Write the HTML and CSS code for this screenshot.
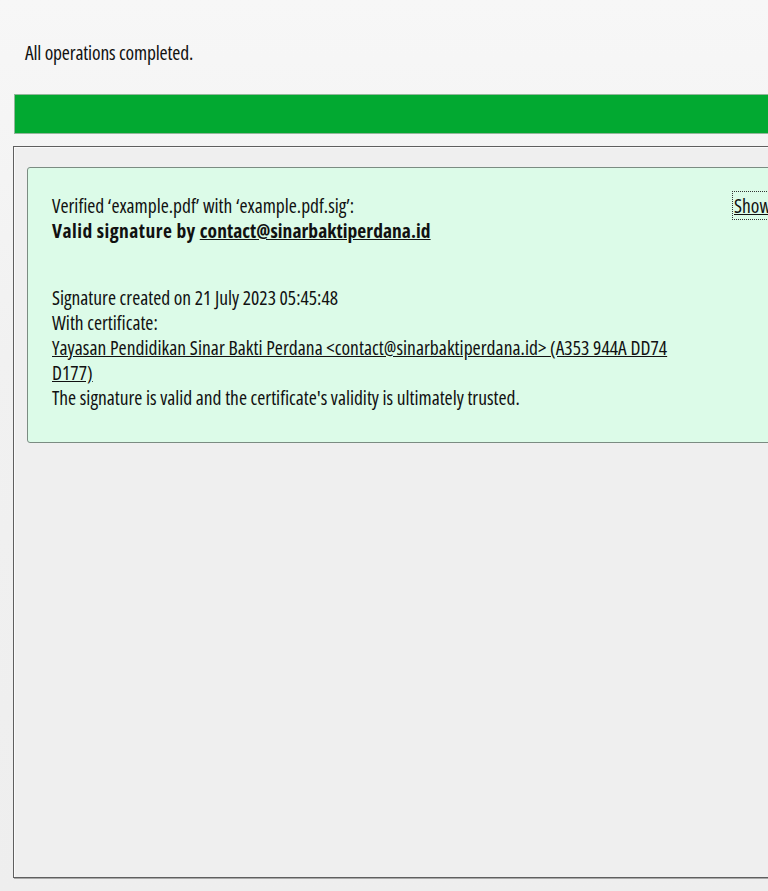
FILE: index.html
```html
<!DOCTYPE html>
<html lang="en">
<head>
    <meta charset="UTF-8">
    <meta name="viewport" content="width=device-width, initial-scale=1.0">
    <title>Verification result</title>
    <link rel="stylesheet" href="styles.css">
</head>
<body>
    <div class="window">
        <p class="status">All operations completed.</p>

        <!-- progress -->
        <div class="progress"></div>

        <div class="results">
            <div class="result ok">
                <div class="result-text">
                    <p>Verified ‘example.pdf’ with ‘example.pdf.sig’:<br>
                    <b>Valid signature by <a href="#">contact@sinarbaktiperdana.id</a></b></p>

                    <p class="details">Signature created on 21 July 2023 05:45:48<br>
                    With certificate:<br>
                    <a href="#">Yayasan Pendidikan Sinar Bakti Perdana &lt;contact@sinarbaktiperdana.id&gt; (A353 944A DD74 D177)</a><br>
                    The signature is valid and the certificate's validity is ultimately trusted.</p>
                </div>
                <a class="show" href="#">Show</a>
            </div>
        </div>
    </div>
</body>
</html>
```

FILE: styles.css
```css
/* base */
html, body {
    margin: 0;
    padding: 0;
    overflow: hidden;
}
body {
    font-family: "Open Sans", "DejaVu Sans", sans-serif;
    font-stretch: condensed;
    font-size: 19.5px;
    font-weight: 430;
    line-height: 25px;
    color: #111;
    background: linear-gradient(180deg, #f7f7f7 0%, #f1f1f1 40%, #eeeeee 100%);
    height: 891px;
}
a {
    color: #111;
    text-decoration: underline;
}
p {
    margin: 0;
}
b {
    font-weight: 700;
    letter-spacing: 0.48px;
}
.window {
    width: 820px;
}
.status {
    padding: 40px 0 0 25px;
    letter-spacing: -0.15px;
}
.progress {
    margin: 29px 0 0 14px;
    height: 38px;
    background: #02a931;
    border: 1px solid #93b79b;
}
.results {
    margin: 12px 0 0 13px;
    height: 710px;
    border: 1px solid #5f5f5f;
    box-shadow: 1px 1px 0 #a8a8a8, inset 1px 1px 0 #fafafa;
    background: #efefef;
    padding: 20px 0 0 13px;
}
.result {
    display: flex;
    align-items: flex-start;
    border: 1px solid #7b8c82;
    border-radius: 3px;
    background: #dcfbe8;
    padding: 25px 0 32px 24px;
}
.result-text {
    flex: 0 0 640px;
}
.result-text a {
    letter-spacing: 0.05px;
}
.result .details {
    margin-top: 42px;
}
.show {
    margin-left: 42px;
    outline: 1px dotted #333;
    outline-offset: 1px;
}
```
